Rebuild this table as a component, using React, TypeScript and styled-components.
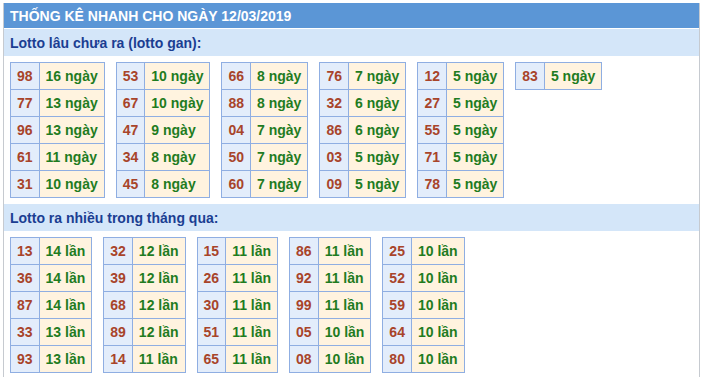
import { Fragment } from 'react';
import styled, { createGlobalStyle } from 'styled-components';

const GlobalStyle = createGlobalStyle`
  body {
    margin: 0;
    background: #ffffff;
    font-family: 'Liberation Sans', Arial, sans-serif;
  }
`;

type Entry = [string, string];

const ganTables: Entry[][] = [
  [['98', '16'], ['77', '13'], ['96', '13'], ['61', '11'], ['31', '10']],
  [['53', '10'], ['67', '10'], ['47', '9'], ['34', '8'], ['45', '8']],
  [['66', '8'], ['88', '8'], ['04', '7'], ['50', '7'], ['60', '7']],
  [['76', '7'], ['32', '6'], ['86', '6'], ['03', '5'], ['09', '5']],
  [['12', '5'], ['27', '5'], ['55', '5'], ['71', '5'], ['78', '5']],
  [['83', '5']],
];

const hotTables: Entry[][] = [
  [['13', '14'], ['36', '14'], ['87', '14'], ['33', '13'], ['93', '13']],
  [['32', '12'], ['39', '12'], ['68', '12'], ['89', '12'], ['14', '11']],
  [['15', '11'], ['26', '11'], ['30', '11'], ['51', '11'], ['65', '11']],
  [['86', '11'], ['92', '11'], ['99', '11'], ['05', '10'], ['08', '10']],
  [['25', '10'], ['52', '10'], ['59', '10'], ['64', '10'], ['80', '10']],
];

const Panel = styled.div`
  margin: 3px 0 0 3px;
  width: 695px;
  min-height: 380px;
  border-left: 1px solid #c6cad0;
  border-right: 1px solid #c6cad0;
`;

const Header = styled.div`
  height: 25px;
  display: flex;
  align-items: center;
  padding-left: 6px;
  background: #5b96d6;
  color: #ffffff;
  font-size: 14px;
  font-weight: bold;
`;

const SubHeader = styled.div`
  height: 27px;
  margin-top: 1px;
  display: flex;
  align-items: center;
  padding-left: 6px;
  background: #d4e6f9;
  color: #1b3e92;
  font-size: 14px;
  font-weight: bold;
`;

const TableRow = styled.div`
  display: flex;
  align-items: flex-start;
  gap: 11px;
  padding: 6px 6px 5px;
`;

const StatTable = styled.div`
  display: grid;
  grid-template-columns: auto auto;
  border-top: 1px solid #8faee2;
  border-left: 1px solid #8faee2;
`;

const Cell = styled.div<{ $num?: boolean }>`
  height: 26px;
  display: flex;
  align-items: center;
  padding: 0 6px;
  border-right: 1px solid #8faee2;
  border-bottom: 1px solid #8faee2;
  background: ${(p) => (p.$num ? '#e3edfb' : '#fff3df')};
  color: ${(p) => (p.$num ? '#a8442a' : '#1f7c1f')};
  font-size: 14px;
  font-weight: bold;
  white-space: nowrap;
`;

const Section = ({
  title,
  tables,
  unit,
}: {
  title: string;
  tables: Entry[][];
  unit: string;
}) => (
  <>
    <SubHeader>{title}</SubHeader>
    <TableRow>
      {tables.map((rows, i) => (
        <StatTable key={i}>
          {rows.map(([num, count]) => (
            <Fragment key={num}>
              <Cell $num>{num}</Cell>
              <Cell>
                {count} {unit}
              </Cell>
            </Fragment>
          ))}
        </StatTable>
      ))}
    </TableRow>
  </>
);

export default function App() {
  return (
    <>
      <GlobalStyle />
      <Panel>
        <Header>THỐNG KÊ NHANH CHO NGÀY 12/03/2019</Header>
        <Section title="Lotto lâu chưa ra (lotto gan):" tables={ganTables} unit="ngày" />
        <Section title="Lotto ra nhiều trong tháng qua:" tables={hotTables} unit="lần" />
      </Panel>
    </>
  );
}
